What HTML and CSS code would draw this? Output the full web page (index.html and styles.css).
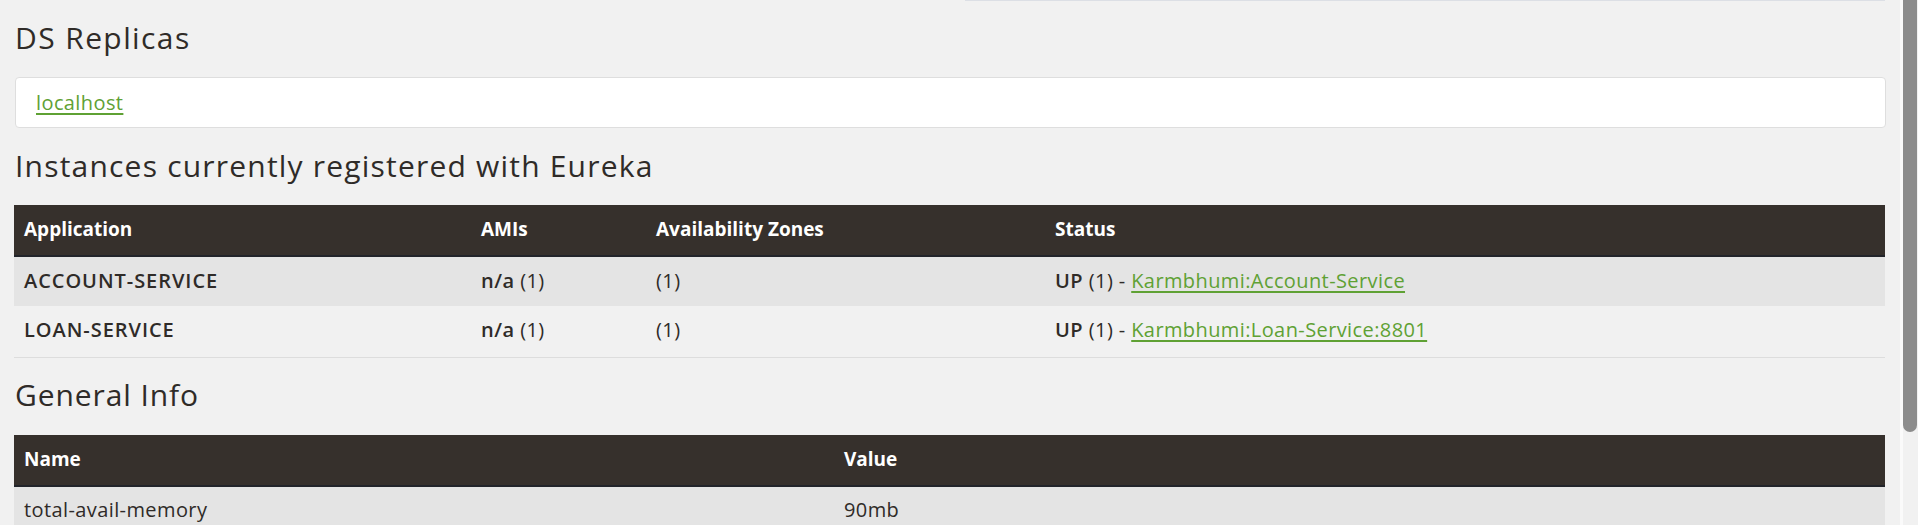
FILE: index.html
```html
<!DOCTYPE html>
<html lang="en">
<head>
<meta charset="utf-8">
<title>Eureka</title>
<link rel="stylesheet" href="styles.css">
</head>
<body>
<div class="page">
  <main class="content">
    <div class="topline"></div>
    <h2 class="heading heading-first">DS Replicas</h2>
    <div class="card">
      <a class="link" href="#">localhost</a>
    </div>
    <h2 class="heading heading-instances">Instances currently registered with Eureka</h2>
    <table class="tbl">
      <colgroup>
        <col class="c-app"><col class="c-ami"><col class="c-zone"><col class="c-status">
      </colgroup>
      <thead>
        <tr><th>Application</th><th>AMIs</th><th>Availability Zones</th><th>Status</th></tr>
      </thead>
      <tbody>
        <tr class="odd">
          <td><b>ACCOUNT-SERVICE</b></td>
          <td><b>n/a</b> (1)</td>
          <td>(1)</td>
          <td><b>UP</b> (1) - <a class="link" href="#">Karmbhumi:Account-Service</a></td>
        </tr>
        <tr class="even last">
          <td><b>LOAN-SERVICE</b></td>
          <td><b>n/a</b> (1)</td>
          <td>(1)</td>
          <td><b>UP</b> (1) - <a class="link" href="#">Karmbhumi:Loan-Service:8801</a></td>
        </tr>
      </tbody>
    </table>
    <h2 class="heading heading-info">General Info</h2>
    <table class="tbl">
      <colgroup>
        <col class="c-name"><col class="c-value">
      </colgroup>
      <thead>
        <tr><th>Name</th><th>Value</th></tr>
      </thead>
      <tbody>
        <tr class="odd">
          <td>total-avail-memory</td>
          <td>90mb</td>
        </tr>
      </tbody>
    </table>
  </main>
  <div class="scrollbar"><div class="thumb"></div></div>
</div>
</body>
</html>
```

FILE: styles.css
```css
html, body {
  margin: 0;
  padding: 0;
  height: 525px;
  overflow: hidden;
  background: #f1f1f1;
}

body {
  font-family: "Open Sans", "Liberation Sans", sans-serif;
  color: #2f2b28;
}

.page {
  display: flex;
  height: 525px;
}

.content {
  flex: 1;
  padding: 0 15px 0 14px;
  min-width: 0;
}

.topline {
  height: 1px;
  margin-left: 951px;
  background: #dcdfe5;
}

.heading {
  font-family: "Open Sans", "Liberation Sans", sans-serif;
  font-weight: 500;
  font-size: 30px;
  line-height: 33px;
  letter-spacing: 1.2px;
  margin: 0;
  color: #2f2b28;
  padding-left: 1px;
}

.heading-first { margin-top: 20px; margin-bottom: 23px; letter-spacing: 1.4px; }
.heading-instances { margin-top: 21px; margin-bottom: 23px; }
.heading-info { margin-top: 20px; margin-bottom: 24px; letter-spacing: 0.9px; }

.card {
  background: #fff;
  border: 1px solid #dedede;
  border-radius: 4px;
  height: 49px;
  display: flex;
  align-items: center;
  padding-left: 20px;
  padding-bottom: 1px;
  box-sizing: border-box;
  height: 51px;
  margin-left: 1px;
  margin-right: -1px;
}

.link {
  color: #5fa134;
  text-decoration: underline;
  text-decoration-thickness: 2px;
  text-underline-offset: 3px;
}

.card .link {
  font-size: 20px;
  letter-spacing: 0.4px;
}

.tbl {
  width: 100%;
  border-collapse: collapse;
  table-layout: fixed;
  font-size: 20px;
  letter-spacing: 0.4px;
}

.c-app { width: 457px; }
.c-ami { width: 175px; }
.c-zone { width: 399px; }
.c-name { width: 820px; }

.tbl th {
  background: #36302c;
  color: #fff;
  font-weight: 700;
  font-size: 19px;
  letter-spacing: 0;
  text-align: left;
  height: 48px;
  padding: 0 10px 2px;
  border-bottom: 2px solid #22242a;
  box-sizing: content-box;
}

.tbl td {
  height: 50px;
  padding: 0 10px 3px;
  box-sizing: border-box;
}

.tbl td b {
  font-weight: 600;
  letter-spacing: 0.95px;
}

.tbl td:nth-child(2) b,
.tbl td:nth-child(4) b { letter-spacing: 0.5px; }

.tbl tr.odd td { background: #e4e4e4; }
.tbl tr.last td { border-bottom: 1px solid #dddddd; height: 51px; }

.scrollbar {
  width: 18px;
  display: flex;
  background: #f1f1f1;
  padding-left: 4px;
  box-sizing: border-box;
  border-left: 3px solid #fafafa;
}

.thumb {
  width: 14px;
  height: 432px;
  background: #8c8c8c;
  border-radius: 0 0 7px 7px;
  margin-left: -4px;
}
```
